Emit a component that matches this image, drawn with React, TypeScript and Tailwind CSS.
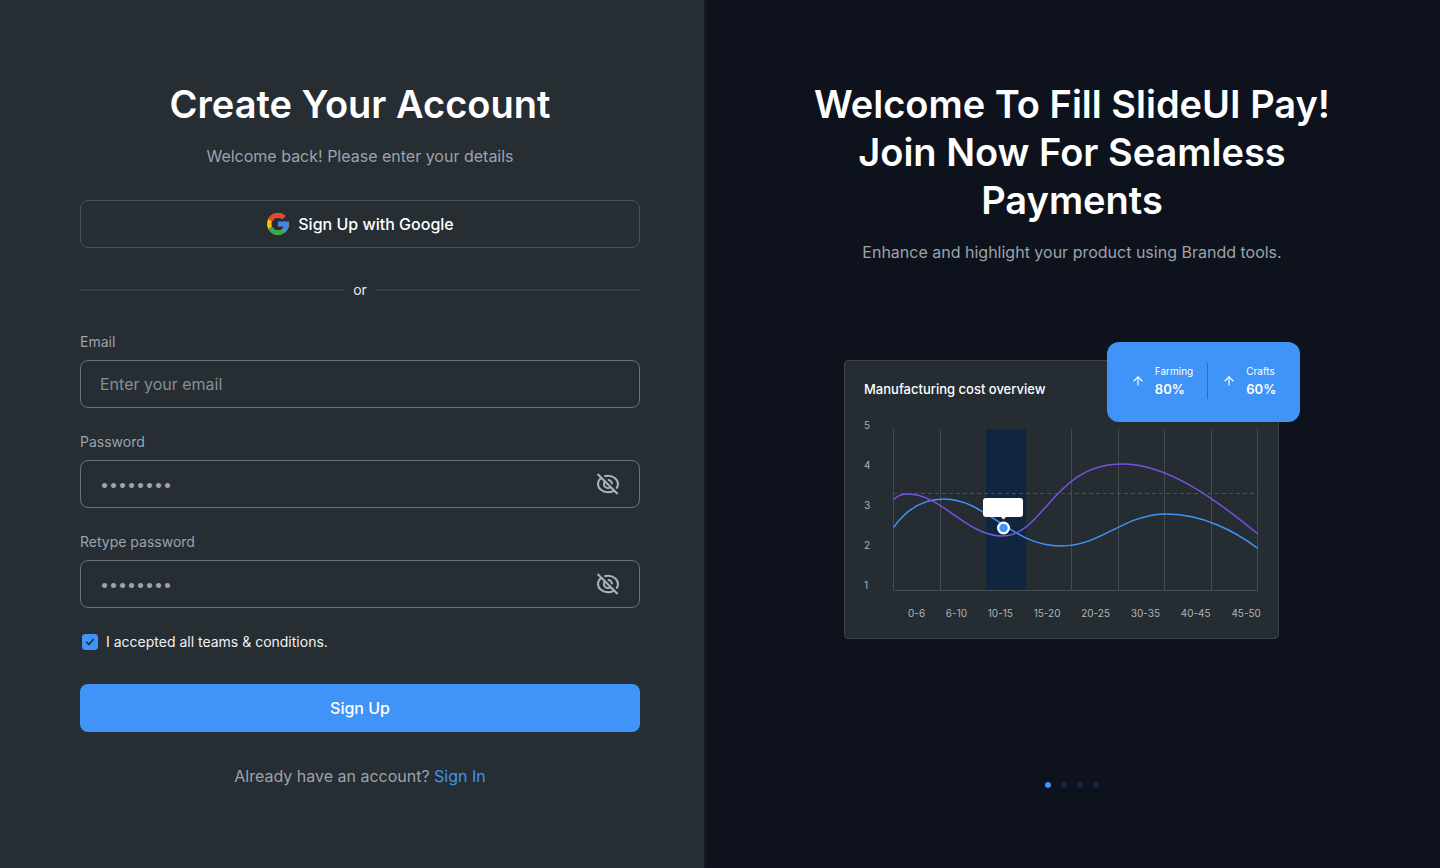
import { useState } from "react";
import { ArrowUp } from "lucide-react";

const costLevels = [5, 4, 3, 2, 1];
const ranges = ["0-6", "6-10", "10-15", "15-20", "20-25", "30-35", "40-45", "45-50"];
const slides = [1, 2, 3, 4];
const columnLines = [47, 178, 225, 271, 318];

function GoogleLogo() {
  return (
    <svg viewBox="2 2 44 44" className="size-6" aria-hidden="true">
      <path fill="#FFC107" d="M43.611 20.083H42V20H24v8h11.303c-1.649 4.657-6.08 8-11.303 8-6.627 0-12-5.373-12-12s5.373-12 12-12c3.059 0 5.842 1.154 7.961 3.039l5.657-5.657C34.046 6.053 29.268 4 24 4 12.955 4 4 12.955 4 24s8.955 20 20 20 20-8.955 20-20c0-1.341-.138-2.65-.389-3.917z" />
      <path fill="#EA4335" d="m6.306 14.691 6.571 4.819C14.655 15.108 18.961 12 24 12c3.059 0 5.842 1.154 7.961 3.039l5.657-5.657C34.046 6.053 29.268 4 24 4 16.318 4 9.656 8.337 6.306 14.691z" />
      <path fill="#34A853" d="M24 44c5.166 0 9.86-1.977 13.409-5.192l-6.19-5.238C29.211 35.091 26.715 36 24 36c-5.202 0-9.619-3.317-11.283-7.946l-6.522 5.025C9.505 39.556 16.227 44 24 44z" />
      <path fill="#4285F4" d="M43.611 20.083H42V20H24v8h11.303c-.792 2.237-2.231 4.166-4.087 5.571l6.19 5.238C36.971 39.205 44 34 44 24c0-1.341-.138-2.65-.389-3.917z" />
    </svg>
  );
}

function EyeOff() {
  return (
    <svg viewBox="0 0 24 24" className="size-6" fill="none" stroke="currentColor" strokeWidth="2" aria-hidden="true">
      <path d="M5.300 5.700C3.300 7.200 2 9.500 2 12c0 4.500 4.500 8.200 10 8.200 2.100 0 4-.5 5.600-1.400" />
      <path d="M8.300 4.300c1.100-.3 2.400-.5 3.700-.5 5.500 0 10 3.700 10 8.200 0 1.700-.6 3.300-1.700 4.600" />
      <path d="M9 9.400a4 4 0 0 0 5.600 5.700" />
      <path d="M11.800 8a4 4 0 0 1 4.200 4.200" />
      <path d="m1.600 2 20 20" />
    </svg>
  );
}

function PasswordField({ id, label }: { id: string; label: string }) {
  const [visible, setVisible] = useState(false);
  return (
    <div className="mt-6">
      <label htmlFor={id} className="block text-sm leading-5 text-[#9ca3ab]">
        {label}
      </label>
      <div className="mt-2 flex h-12 items-center rounded-lg border border-[#6b727a] px-[19px]">
        <input
          id={id}
          type={visible ? "text" : "password"}
          defaultValue="12345678"
          className="min-w-0 flex-1 bg-transparent text-base text-[#9ca3ab] outline-none"
        />
        <button type="button" aria-label="Toggle visibility" onClick={() => setVisible(!visible)} className="text-[#aeb4bb]">
          <EyeOff />
        </button>
      </div>
    </div>
  );
}

function SignUpForm() {
  return (
    <form className="flex flex-col" onSubmit={(e) => e.preventDefault()}>
      <h1 className="text-center text-[38px] leading-12 font-semibold text-white">Create Your Account</h1>
      <p className="mt-4 text-center text-base text-[#9ca3ab]">Welcome back! Please enter your details</p>
      <button type="button" className="mt-8 flex h-12 items-center justify-center gap-2 rounded-lg border border-[#495057] text-base font-medium text-white">
        <GoogleLogo />
        Sign Up with Google
      </button>
      <div className="mt-8 flex items-center gap-2 text-sm leading-5 text-[#e9ecef]">
        <span className="h-0.5 flex-1 bg-[#363d45]" />
        or
        <span className="h-0.5 flex-1 bg-[#363d45]" />
      </div>
      <div className="mt-8">
        <label htmlFor="email" className="block text-sm leading-5 text-[#9ca3ab]">
          Email
        </label>
        <input
          id="email"
          type="email"
          placeholder="Enter your email"
          className="mt-2 block h-12 w-full rounded-lg border border-[#6b727a] bg-transparent px-[19px] text-base text-white outline-none placeholder:text-[#868e96]"
        />
      </div>
      <PasswordField id="password" label="Password" />
      <PasswordField id="retype" label="Retype password" />
      <label className="mt-6 flex items-center gap-2 pl-0.5 text-sm leading-5 text-[#f1f3f5]">
        <span className="grid size-4">
          <input
            type="checkbox"
            defaultChecked
            className="peer col-start-1 row-start-1 size-4 appearance-none rounded-[3px] border border-[#4094f7] checked:bg-[#4094f7]"
          />
          <svg
            viewBox="0 0 16 16"
            className="pointer-events-none invisible col-start-1 row-start-1 size-4 peer-checked:visible"
            fill="none"
            stroke="#1f2a36"
            strokeWidth="1.500"
            strokeLinecap="round"
            strokeLinejoin="round"
            aria-hidden="true"
          >
            <path d="m4.700 8.200 2.200 2.300 4.300-5" />
          </svg>
        </span>
        I accepted all teams &amp; conditions.
      </label>
      <button type="submit" className="mt-8 h-12 rounded-lg bg-[#4094f7] text-base font-medium text-white">
        Sign Up
      </button>
      <p className="mt-8 text-center text-base text-[#9ca3ab]">
        Already have an account?{" "}
        <a href="#sign-in" className="text-[#4094f7]">
          Sign In
        </a>
      </p>
    </form>
  );
}

function CostPlot() {
  return (
    <svg viewBox="0 0 366 162" className="h-[162px] w-[366px]" fill="none" aria-hidden="true">
      <path d="M.5 0v161.500h364V0" stroke="#434a52" />
      {columnLines.map((x) => (
        <path key={x} d={`M${x}.5 0v161`} stroke="#434a52" />
      ))}
      <rect x="93" width="40" height="161" fill="#10263f" />
      <path d="M0 64.500h366" stroke="#495057" strokeDasharray="4 3" />
      <path d="M.5 98.500C13 81 29 70 51 70c42 0 67 47 117 47 41 0 62-32 106-32 35 0 68 17 91 34.500" stroke="#4094f7" strokeWidth="1.500" />
      <path d="M.5 70.500C5 66 9 65 15 65c33 0 59 42 94 42 42 0 51-72 120-72 46 0 93 35 136 70" stroke="#7553e0" strokeWidth="1.500" />
      <rect x="90" y="69" width="40" height="19" rx="3" fill="#fff" />
      <path d="m107.500 87.500 3 3 3-3z" fill="#fff" />
      <circle cx="110.500" cy="99" r="6.500" fill="#fff" />
      <circle cx="110.500" cy="99" r="4.200" fill="#4094f7" />
    </svg>
  );
}

function Stat({ label, value }: { label: string; value: string }) {
  return (
    <div className="flex items-center gap-2.5">
      <ArrowUp className="size-3.5" strokeWidth={2} />
      <div>
        <div className="text-[10px] leading-4">{label}</div>
        <div className="text-[13px] leading-5 font-semibold">{value}</div>
      </div>
    </div>
  );
}

function CostOverview() {
  return (
    <figure className="relative mt-[78px] w-[456px] pt-[18px] pr-[21px]">
      <div className="rounded border border-[#3b424a] bg-[#252c32] pt-[18px] pr-[17px] pb-[17px] pl-[19px]">
        <figcaption className="text-[13px] leading-5 font-medium text-white">Manufacturing cost overview</figcaption>
        <div className="mt-[26px] flex gap-[21px]">
          <div className="-mt-1.5 flex w-2 flex-col justify-between text-[10px] leading-3 text-[#adb5bd]">
            {costLevels.map((n) => (
              <span key={n}>{n}</span>
            ))}
          </div>
          <div className="mt-1">
            <CostPlot />
          </div>
        </div>
        <div className="mt-3.5 flex justify-between pl-11 text-[10px] leading-4 text-[#adb5bd]">
          {ranges.map((r) => (
            <span key={r}>{r}</span>
          ))}
        </div>
      </div>
      <div className="absolute top-0 right-0 flex h-20 w-[193px] items-center justify-center gap-3.5 rounded-xl bg-[#4094f7] pb-0.5 text-white">
        <Stat label="Farming" value="80%" />
        <span className="h-9 w-px bg-[#3a6a9f]" />
        <Stat label="Crafts" value="60%" />
      </div>
    </figure>
  );
}

export default function App() {
  return (
    <main className="grid min-h-screen grid-cols-[704fr_736fr] bg-[#0d121c] font-['Inter',sans-serif]">
      <section className="bg-[#262d33] py-20 pr-16 pl-20 shadow-[0_0_4px_#262d33]">
        <SignUpForm />
      </section>
      <section className="flex flex-col items-center px-20 py-20">
        <h2 className="text-center text-[38px] leading-12 font-semibold text-white">
          Welcome To Fill SlideUI Pay! Join Now For Seamless Payments
        </h2>
        <p className="mt-4 text-base text-[#9ca3ab]">Enhance and highlight your product using Brandd tools.</p>
        <CostOverview />
        <nav aria-label="Slides" className="mt-auto flex gap-2.5">
          {slides.map((n) => (
            <button
              key={n}
              type="button"
              aria-label={`Slide ${n}`}
              className={n === 1 ? "size-1.5 rounded-full bg-[#4094f7]" : "size-1.5 rounded-full bg-[#132846]"}
            />
          ))}
        </nav>
      </section>
    </main>
  );
}
